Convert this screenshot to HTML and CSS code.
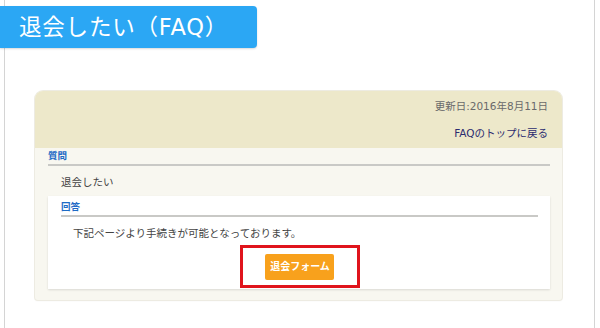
FILE: index.html
```html
<!DOCTYPE html>
<html lang="ja">
<head>
<meta charset="utf-8">
<title>退会したい（FAQ）</title>
<link rel="stylesheet" href="styles.css">
</head>
<body>
<div class="page">
  <h1 class="title">退会したい（FAQ）</h1>
  <div class="faq">
    <div class="faq-head">
      <p class="date">更新日:2016年8月11日</p>
      <a class="back" href="#">FAQのトップに戻る</a>
    </div>
    <div class="faq-body">
      <h2 class="label">質問</h2>
      <p class="question">退会したい</p>
      <div class="answer">
        <h2 class="label">回答</h2>
        <p class="answer-text">下記ページより手続きが可能となっております。</p>
        <div class="btn-row">
          <div class="highlight"><a class="btn" href="#">退会フォーム</a></div>
        </div>
      </div>
    </div>
  </div>
</div>
</body>
</html>
```
FILE: styles.css
```css
html, body {
  margin: 0;
  padding: 0;
  background: #ffffff;
  font-family: "DejaVu Sans", "Noto Sans CJK JP", sans-serif;
}
.page {
  margin: 0 5px 0 4px;
  height: 328px;
  box-sizing: border-box;
  border-left: 1px solid #d4d4d4;
  border-right: 1px solid #d4d4d4;
  padding-top: 6px;
}
.title {
  margin: 0 0 0 -5px;
  width: 257px;
  height: 42px;
  box-sizing: border-box;
  padding-left: 19px;
  background: #2ba7f4;
  color: #ffffff;
  font-size: 22.5px;
  letter-spacing: 0.8px;
  font-weight: normal;
  line-height: 42px;
  border-radius: 0 4px 4px 0;
  box-shadow: 0 1px 2px rgba(0, 0, 0, 0.15);
}
.faq {
  margin: 43px 32px 0 30px;
  border-radius: 8px 8px 3px 3px;
  background: #f8f7f0;
  box-shadow: 0 0 0 1px #edebe2, 0 1px 2px rgba(0, 0, 0, 0.06);
  overflow: hidden;
}
.faq-head {
  background: #ede8ca;
  height: 57px;
  box-sizing: border-box;
  padding: 8px 14px 0 0;
  display: flex;
  flex-direction: column;
  align-items: flex-end;
  gap: 12px;
  font-size: 10.5px;
  line-height: 15px;
}
.date {
  margin: 0;
  color: #6a6a6a;
}
.back {
  color: #2c2c70;
  text-decoration: none;
}
.faq-body {
  padding: 2px 12px 11px 13px;
}
.label {
  margin: 0;
  font-size: 9.5px;
  line-height: 12px;
  font-weight: bold;
  color: #1d6bc6;
  padding-bottom: 2px;
  border-bottom: 2px solid #c9c9c6;
}
.question {
  margin: 9px 0 0 0;
  padding-left: 13px;
  font-size: 10.5px;
  line-height: 15px;
  color: #444444;
}
.answer {
  margin-top: 6px;
  background: #ffffff;
  padding: 5px 12px 1px 13px;
  box-shadow: 0 1px 2px rgba(0, 0, 0, 0.12);
}
.answer-text {
  margin: 9px 0 0 0;
  padding-left: 12px;
  font-size: 10.5px;
  line-height: 15px;
  color: #444444;
}
.btn-row {
  display: flex;
  justify-content: center;
  margin-top: 4px;
}
.highlight {
  width: 120px;
  height: 43px;
  box-sizing: border-box;
  border: 3px solid #e0141c;
  display: flex;
  justify-content: center;
  padding-top: 6px;
}
.btn {
  display: block;
  height: 26px;
  line-height: 26px;
  padding: 0 4px 0 5px;
  background: #f8a11c;
  color: #ffffff;
  font-size: 10px;
  font-weight: bold;
  text-decoration: none;
  border-radius: 2px;
}
```
